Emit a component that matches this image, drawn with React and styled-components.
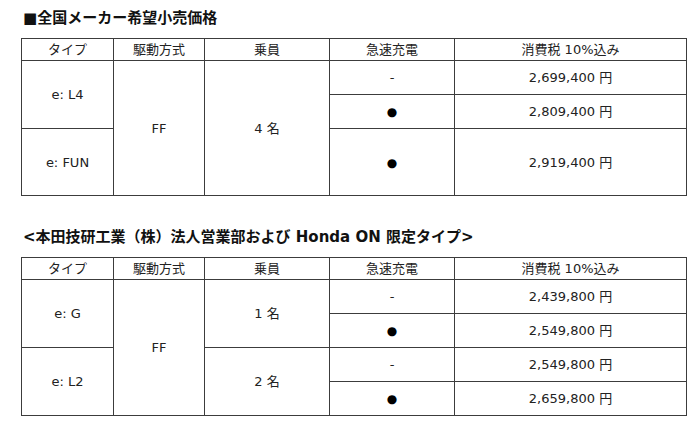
import React from "react";
import styled, { createGlobalStyle } from "styled-components";

const Global = createGlobalStyle`
  html, body { margin: 0; padding: 0; background: #fff; }
  body { font-family: "DejaVu Sans", "Noto Sans CJK JP", sans-serif; color: #1e1e1e; }
`;

const Page = styled.div`
  width: 700px;
  padding: 8px 0 0 21px;
  box-sizing: border-box;
`;

const Title = styled.h2`
  margin: ${(p) => (p.$first ? "0" : "31px")} 0 10px 0;
  padding-left: 2px;
  font-family: "DejaVu Sans", "Noto Sans CJK JP", sans-serif;
  font-size: 15px;
  font-weight: 700;
  line-height: 20px;
  height: 20px;
  color: #111;
  white-space: nowrap;
`;

const Grid = styled.div`
  display: grid;
  width: 666px;
  box-sizing: border-box;
  grid-template-columns: 92px 91px 125px 125px 232px;
  grid-template-rows: ${(p) => p.$rows};
  border-top: 1px solid #3c3c3c;
  border-left: 1px solid #3c3c3c;
`;

const Cell = styled.div`
  box-sizing: border-box;
  grid-column: ${(p) => p.$col};
  grid-row: ${(p) => p.$row} / span ${(p) => p.$span || 1};
  border-right: 1px solid #3c3c3c;
  border-bottom: 1px solid #3c3c3c;
  display: flex;
  align-items: center;
  justify-content: center;
  font-size: 13px;
  line-height: 16px;
  color: #222;
  white-space: nowrap;
  padding-top: ${(p) => (p.$head ? "0" : "1px")};
`;

const Dot = styled.span`
  font-size: 12px;
  color: #000;
`;

const heads = ["タイプ", "駆動方式", "乗員", "急速充電", "消費税 10%込み"];

function HeadRow() {
  return heads.map((h, i) => (
    <Cell key={h} $head $col={i + 1} $row={1}>
      {h}
    </Cell>
  ));
}

function Charge({ on, row }) {
  return (
    <Cell $col={4} $row={row}>
      {on ? <Dot>●</Dot> : "-"}
    </Cell>
  );
}

export default function App() {
  return (
    <>
      <Global />
      <Page>
        <Title $first>■全国メーカー希望小売価格</Title>
        <Grid $rows="22px 34px 34px 67px">
          <HeadRow />
          <Cell $col={1} $row={2} $span={2}>e: L4</Cell>
          <Cell $col={1} $row={4}>e: FUN</Cell>
          <Cell $col={2} $row={2} $span={3}>FF</Cell>
          <Cell $col={3} $row={2} $span={3}>4 名</Cell>
          <Charge row={2} on={false} />
          <Charge row={3} on />
          <Charge row={4} on />
          <Cell $col={5} $row={2}>2,699,400 円</Cell>
          <Cell $col={5} $row={3}>2,809,400 円</Cell>
          <Cell $col={5} $row={4}>2,919,400 円</Cell>
        </Grid>

        <Title>&lt;本田技研工業（株）法人営業部および Honda ON 限定タイプ&gt;</Title>
        <Grid $rows="22px 34px 34px 34px 34px">
          <HeadRow />
          <Cell $col={1} $row={2} $span={2}>e: G</Cell>
          <Cell $col={1} $row={4} $span={2}>e: L2</Cell>
          <Cell $col={2} $row={2} $span={4}>FF</Cell>
          <Cell $col={3} $row={2} $span={2}>1 名</Cell>
          <Cell $col={3} $row={4} $span={2}>2 名</Cell>
          <Charge row={2} on={false} />
          <Charge row={3} on />
          <Charge row={4} on={false} />
          <Charge row={5} on />
          <Cell $col={5} $row={2}>2,439,800 円</Cell>
          <Cell $col={5} $row={3}>2,549,800 円</Cell>
          <Cell $col={5} $row={4}>2,549,800 円</Cell>
          <Cell $col={5} $row={5}>2,659,800 円</Cell>
        </Grid>
      </Page>
    </>
  );
}
